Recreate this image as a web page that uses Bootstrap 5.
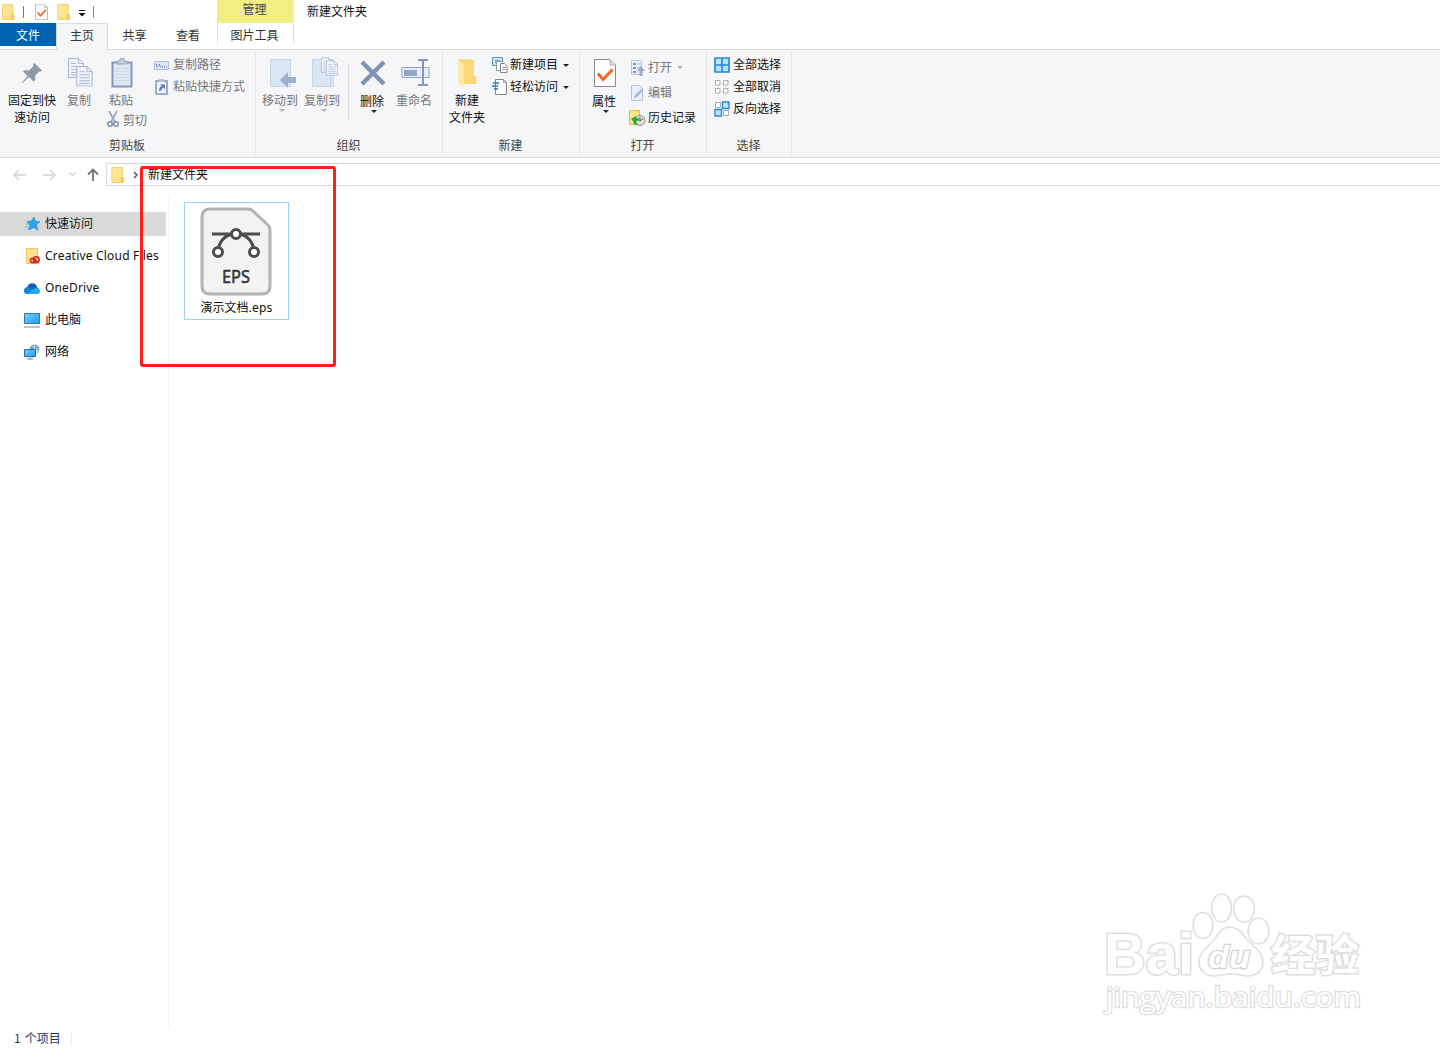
<!DOCTYPE html>
<html lang="zh-CN">
<head>
<meta charset="utf-8">
<meta name="viewport" content="width=device-width, initial-scale=1">
<title>新建文件夹</title>
<link href="https://cdn.jsdelivr.net/npm/bootstrap@5.3.0/dist/css/bootstrap.min.css" rel="stylesheet">
<style>
body{font-family:"Noto Sans","Noto Sans CJK SC",sans-serif;font-size:12px;line-height:17px;color:#111;background:#fff;height:1048px;overflow:hidden;white-space:nowrap}
.zh{font-family:"Noto Sans CJK SC",sans-serif}
svg{display:block;flex:none}
.titlebar{height:23px}
.manage{width:77px;margin-left:122px;background:#f1ee83;color:#444;text-align:center;height:23px;padding-right:2px}
.quick{width:95px;height:23px}
.tabs{height:27px;border-bottom:1px solid #dadbdc}
.tab-item{height:24px;line-height:24px;text-align:center;color:#333}
.tab-file{background:#0063b1;color:#fff;width:56px;height:23px;line-height:23px}
.tab-home{background:#f5f6f7;border:1px solid #dadbdc;border-bottom:0;width:52px;height:27px;line-height:22px}
.tab-pic{width:77px;border-left:1px solid #ddd;border-right:1px solid #ddd;height:21px;padding-right:2px}
.ribbon{height:108px;background:#f5f6f7;border-bottom:1px solid #dadbdc;padding-top:2px}
.rgroup{height:102px;border-right:1px solid #e2e3e4}
.rbody{height:84px}
.rlabel{text-align:center;color:#444;line-height:18px;margin-right:1px}
.big{text-align:center;flex:none}
.pic{height:39px;padding-top:2px;display:flex;align-items:center;justify-content:center}
.pic.low{height:40px}
.dim{color:#777}
.r22>div{height:22px}
.r22 span{padding-bottom:3px}
.r25>div{height:25px}
.r25 span{padding-bottom:2px}
.tri{width:0;height:0;border:3px solid transparent;border-top-color:#222;border-bottom:0}
.tri.soft{border-top-color:#b5b5b5}
.under{margin:1px auto 0 auto;position:relative;left:2px}
.vline{width:1px;height:56px;background:#dcdddf;margin-top:12px}
.addr{height:28px;padding-top:5px}
.addrbox{height:23px;border:1px solid #d9d9d9;border-right:0}
.addrbox span{padding-bottom:2px}
.side{width:169px;border-right:1px solid #f2f2f2;margin-top:10px;height:832px;padding-top:16px}
.side>div{height:24px;margin-bottom:8px;width:166px;padding-left:24px}
.side .on{background:#d9d9d9}
.side svg{margin-right:5px}
.side span{padding-bottom:3px}
.latin{font-family:"Noto Sans",sans-serif}
.side .latin{padding-bottom:2px}
.cc{letter-spacing:.2px}
.od{letter-spacing:.15px}
.tile{width:105px;height:118px;border:1px solid #99d1ff;margin:16px 0 0 15px;padding-top:4px}
.caption-line{line-height:18px;margin-top:1px}
.marker{position:absolute;left:140px;top:166px;width:196px;height:201px;border:3px solid #ff2015;border-radius:3px}
.wm{position:absolute;left:1095px;top:885px}
.status{height:20px;color:#1e395b;padding-left:14px}
.status span{padding-bottom:2px;word-spacing:1.5px}
</style>
<script src="https://cdn.jsdelivr.net/npm/bootstrap@5.3.0/dist/js/bootstrap.bundle.min.js"></script>
</head>
<body class="position-relative zh">
<svg width="0" height="0" class="position-absolute">
<defs>
<linearGradient id="gy" x2="1" y2="1"><stop stop-color="#ffeaa4"/><stop offset="1" stop-color="#ffdd79"/></linearGradient>
<linearGradient id="gb" x2="1" y2="1"><stop stop-color="#7cd0ff"/><stop offset="1" stop-color="#1b9df5"/></linearGradient>
<symbol id="fold" viewBox="0 0 14 17"><path d="M.5.5h11v10.500h1.500v5.500H.5z" fill="url(#gy)" stroke="#efcb5c"/><path d="M11 11v5" stroke="#e5b93c"/></symbol>
<symbol id="chk" viewBox="0 0 22 28"><path d="M.5.5h15.500l5.500 5.500v21.500H.5z" fill="#fff" stroke="#8b8b8b"/><path d="M16 .5V6h5.500" fill="#ddd" stroke="#aaa"/><path d="M4 14.500l5 6 9.500-10" fill="none" stroke="#f26522" stroke-width="3"/></symbol>
<symbol id="doc" viewBox="0 0 16 20"><path d="M.5.5h10l5 5v14H.5z" fill="#f2f6fc" stroke="#a3b5d3"/><path d="M10.500.5v5h5M3 5.500h5M3 8.500h10M3 11.500h10M3 14.500h10M3 17h10" fill="none" stroke="#a9bad6"/></symbol>
</defs>
</svg>

<header class="d-flex titlebar">
 <div class="quick d-flex align-items-center ps-1">
  <svg width="13" height="16" style="margin-left:-2px"><use href="#fold"/></svg>
  <svg width="1" height="12" class="ms-2"><path d="M.5 0v12" stroke="#777"/></svg>
  <svg width="13" height="16" style="margin-left:11px"><use href="#chk"/></svg>
  <svg width="14" height="16" style="margin-left:9px"><use href="#fold"/></svg>
  <svg width="8" height="7" style="margin:3px 0 0 7px"><path d="M1 .5h6" stroke="#111"/><path d="M.5 3h7L4 6.500z" fill="#111"/></svg>
  <svg width="1" height="12" style="margin-left:7px"><path d="M.5 0v12" stroke="#888"/></svg>
 </div>
 <div class="manage">管理</div>
 <div style="margin:2px 0 0 13px">新建文件夹</div>
</header>

<nav class="d-flex tabs">
 <div class="tab-item tab-file">文件</div>
 <div class="tab-item tab-home">主页</div>
 <div class="tab-item" style="width:53px">共享</div>
 <div class="tab-item" style="width:54px">查看</div>
 <div class="tab-item tab-pic" style="margin-left:2px">图片工具</div>
</nav>

<section class="ribbon d-flex">
 <div class="rgroup" style="width:256px">
  <div class="rbody d-flex">
   <div class="big" style="width:60px;margin-left:2px">
    <div class="pic"><svg width="22" height="22" viewBox="0 0 22 22"><path d="M13.500 1l7.500 7.500-2 1.500-1-.5-4 4.500.5 4-2 1.500-4.500-4.500L1.500 21 1 20.500 6.500 14 2 9.500 4 8l4 .5L12.500 4 12 2.500z" fill="#8f9ba3"/></svg></div>
    固定到快<br>速访问
   </div>
   <div class="big dim" style="width:34px"><div class="pic"><svg width="25" height="29" viewBox="0 0 25 29" style="margin-left:2px"><use href="#doc" width="16" height="20"/><use href="#doc" x="8" y="8" width="17" height="20.500"/></svg></div>复制</div>
   <div class="big dim" style="width:50px">
    <div class="pic"><svg width="22" height="30" viewBox="0 0 22 30" style="margin-left:2px"><path d="M1.500 4.500h19v24h-19z" fill="#dfe9f6" stroke="#8498bd" stroke-width="2"/><path d="M6 6V3h3V.5h4V3h3v3z" fill="#c3cddc" stroke="#98a5b9"/><path d="M4 10.500h14M4 13.500h14M4 16.500h14M4 19.500h14M4 22.500h14" stroke="#c9d9ee"/></svg></div>粘贴
    <div class="d-flex align-items-center" style="margin:3px 0 0 11px"><svg width="12" height="17" viewBox="0 0 12 17"><path d="M2 0l6 11M10 0L4 11" stroke="#99a9c6" stroke-width="1.800"/><circle cx="3" cy="13" r="2.300" fill="none" stroke="#7c8fb1" stroke-width="1.500"/><circle cx="9" cy="13" r="2.300" fill="none" stroke="#7c8fb1" stroke-width="1.500"/></svg><span class="ms-1">剪切</span></div>
   </div>
   <div class="r22 dim" style="margin:2px 0 0 8px">
    <div class="d-flex align-items-center"><svg width="15" height="9"><path d="M.5.5h14v8H.5z" fill="#dce8f7" stroke="#b0bfd8"/><path d="M2 3l1.500 3M5 3l1.500 3M8 6h1M10 6h1M12 6h1" stroke="#53709e"/></svg><span style="margin-left:4px">复制路径</span></div>
    <div class="d-flex align-items-center"><svg width="14" height="16" style="margin-left:1px"><path d="M1 2h11v13H1z" fill="#eef4fc" stroke="#8094b8" stroke-width="1.500"/><path d="M4 0h5v3H4z" fill="#b5c1d4"/><path d="M4 12q0-4 2.500-5L5 5.500h5v5L8.500 8.500Q6.500 9.500 6 12z" fill="#6681ac"/></svg><span style="margin-left:4px">粘贴快捷方式</span></div>
   </div>
  </div>
  <div class="rlabel">剪贴板</div>
 </div>

 <div class="rgroup" style="width:187px">
  <div class="rbody d-flex">
   <div class="big dim" style="width:42px;margin-left:3px"><div class="pic"><svg width="27" height="30" viewBox="0 0 27 30" style="margin-left:6px"><path d="M.5 1.500h20v27H.5z" fill="#dbe6f5" stroke="#c8d6ea"/><path d="M10 22l8-8v5h8v6h-8v5z" fill="#9eafcb"/></svg></div>移动到<div class="tri soft under"></div></div>
   <div class="big dim" style="width:42px"><div class="pic"><svg width="27" height="31" viewBox="0 0 27 31" style="margin-left:7px"><path d="M.5 2.500h21v27H.5z" fill="#dbe6f5" stroke="#c8d6ea"/><path d="M18.500 20v9" stroke="#bccde5"/><use href="#doc" x="9" y="0" width="12" height="16"/><use href="#doc" x="14" y="3" width="12" height="16"/></svg></div>复制到<div class="tri soft under"></div></div>
   <div class="vline" style="margin-left:5px"></div>
   <div class="big" style="width:38px;margin-left:4px"><div class="pic low"><svg width="26" height="26" viewBox="0 0 26 26" style="margin-left:2px"><path d="M2 2l22 22M24 2L2 24" stroke="#8093b5" stroke-width="4.500"/></svg></div>删除<div class="tri under"></div></div>
   <div class="big dim" style="width:46px"><div class="pic"><svg width="29" height="27" viewBox="0 0 29 27" style="margin-left:2px"><path d="M1 8.500h27v10H1z" fill="#e5effb" stroke="#91a4c5"/><path d="M3 11h13v6H3z" fill="#93a6c7"/><path d="M22 2v23M17 1h4l1 1 1-1h4M17 26h4l1-1 1 1h4" fill="none" stroke="#8597b7" stroke-width="2"/></svg></div>重命名</div>
  </div>
  <div class="rlabel">组织</div>
 </div>

 <div class="rgroup" style="width:137px">
  <div class="rbody d-flex">
   <div class="big" style="width:42px;margin-left:3px"><div class="pic"><svg width="19" height="28" viewBox="0 0 19 28"><path d="M2 1h14v16h2.500v8H2z" fill="#f9d877"/><path d="M0 1l6 4v23l-6-4z" fill="#ffeba8"/><path d="M0 1h14" stroke="#f0cf70"/></svg></div>新建<br>文件夹</div>
   <div class="r22" style="margin:2px 0 0 4px">
    <div class="d-flex align-items-center"><svg width="16" height="16"><path d="M.5.5h10v8H.5z" fill="#cfe7f5" stroke="#6692a8"/><path d="M3 3h5v3H3z" fill="#5baee0"/><path d="M4.500 4.500h6v9h-6z" fill="#fff" stroke="#999"/><path d="M8.500 6.500h4l2.500 2.500v6.500H8.500z" fill="#fff" stroke="#888"/><path d="M10 10.500h4M10 12.500h4" stroke="#aaa"/></svg><span style="margin:0 5px 0 2px">新建项目</span><div class="tri"></div></div>
    <div class="d-flex align-items-center"><svg width="16" height="16"><path d="M3.500.5h8l3 3v12h-11z" fill="#fff" stroke="#888"/><path d="M11.500.5v3h3" fill="none" stroke="#999"/><path d="M1 4h6M0 7h6M2 10h4" stroke="#2878b8" stroke-width="1.300"/></svg><span style="margin:0 5px 0 2px">轻松访问</span><div class="tri"></div></div>
   </div>
  </div>
  <div class="rlabel">新建</div>
 </div>

 <div class="rgroup" style="width:127px">
  <div class="rbody d-flex">
   <div class="big" style="width:42px;margin-left:3px"><div class="pic low"><svg width="22" height="28" style="margin-left:1px"><use href="#chk"/></svg></div>属性<div class="tri under"></div></div>
   <div class="r25" style="margin:3px 0 0 4px">
    <div class="d-flex align-items-center dim"><svg width="16" height="16" style="margin-left:1px"><path d="M1.500.5h10v14h-10z" fill="#e8f0fb" stroke="#b8c6de"/><path d="M3 3h3v2H3zM3 7h3v2H3zM3 11h3v2H3z" fill="#7d94ba"/><path d="M7 4h4M7 8h3" stroke="#a8b8d2"/><path d="M11 6l4 5h-2.500v5h-3v-5H7z" fill="#9aabc9"/></svg><span style="margin:0 5px 0 2px">打开</span><div class="tri soft"></div></div>
    <div class="d-flex align-items-center dim"><svg width="16" height="16" style="margin-left:1px"><path d="M1.500.5h8l3 3v12h-11z" fill="#e8f0fb" stroke="#b2c2dc"/><path d="M4 14l1-4 7-7 2 2-7 7z" fill="#adbdd6"/></svg><span style="margin-left:2px">编辑</span></div>
    <div class="d-flex align-items-center"><svg width="17" height="16"><path d="M.5.5h10v14H.5z" fill="#ffe58c" stroke="#e6bb3d"/><circle cx="11" cy="10.500" r="5" fill="#e3e3e3" stroke="#888"/><path d="M11 7v4l3-2" fill="none" stroke="#555"/><path d="M2 9l5-3v2q4 0 4 3-3-1-4 0l2 4q-5 0-5-4z" fill="#28a938"/></svg><span style="margin-left:2px">历史记录</span></div>
   </div>
  </div>
  <div class="rlabel">打开</div>
 </div>

 <div class="rgroup" style="width:85px">
  <div class="rbody r22" style="padding:2px 0 0 7px">
   <div class="d-flex align-items-center"><svg width="16" height="16"><path d="M1 1h14v14H1zM8 1v14M1 8h14" fill="#b9e2ff" stroke="#2989dc" stroke-width="1.700"/></svg><span style="margin-left:3px">全部选择</span></div>
   <div class="d-flex align-items-center"><svg width="16" height="16"><path d="M1.500 1.500h4.500v4.500h-4.500zM9.500 1.500h4.500v4.500h-4.500zM1.500 9.500h4.500v4.500h-4.500zM9.500 9.500h4.500v4.500h-4.500z" fill="#fff" stroke="#adadad"/></svg><span style="margin-left:3px">全部取消</span></div>
   <div class="d-flex align-items-center"><svg width="16" height="16"><path d="M1.500 1.500h5v5h-5zM9.500 9.500h5v5h-5z" fill="#fff" stroke="#adadad"/><path d="M8.500 1h6.500v6.500H8.500zM1 8.500h6.500V15H1z" fill="#b9e2ff" stroke="#2989dc" stroke-width="1.400"/></svg><span style="margin-left:3px">反向选择</span></div>
  </div>
  <div class="rlabel">选择</div>
 </div>
</section>

<div class="d-flex addr">
 <div class="d-flex align-items-center" style="width:106px;padding-left:13px">
  <svg width="13" height="12"><path d="M13 6H1M6 1L1 6l5 5" fill="none" stroke="#d4d4d4" stroke-width="1.500"/></svg>
  <svg width="13" height="12" style="margin-left:17px"><path d="M0 6h12M7 1l5 5-5 5" fill="none" stroke="#d4d4d4" stroke-width="1.500"/></svg>
  <svg width="7" height="5" style="margin-left:13px"><path d="M.5.5l3 3 3-3" fill="none" stroke="#ccc" stroke-width="1.200"/></svg>
  <svg width="12" height="13" style="margin-left:11px"><path d="M6 13V1M1 6.500L6 1.500l5 5" fill="none" stroke="#737373" stroke-width="1.800"/></svg>
 </div>
 <div class="addrbox flex-grow-1 d-flex align-items-center">
  <svg width="14" height="16" style="margin-left:4px"><use href="#fold"/></svg>
  <svg width="5" height="8" style="margin-left:8px"><path d="M1 1l3 3-3 3" fill="none" stroke="#555" stroke-width="1.500"/></svg>
  <span style="margin-left:10px">新建文件夹</span>
 </div>
</div>

<main class="d-flex" style="height:842px">
 <aside class="side">
  <div class="on d-flex align-items-center"><svg width="16" height="16"><path d="M10 1l1.500 4.500H16L12.500 9l1.500 5-4.500-2.500L5 14l1-5-3-3.500 4.500-.5z" fill="#2aa5ee" stroke="#1784c7" stroke-width=".6"/><path d="M2 8h4M1 11h4M3 13.500h2" stroke="#58b6ee"/></svg><span>快速访问</span></div>
  <div class="d-flex align-items-center"><svg width="16" height="16"><path d="M2.500.5h11v15h-11z" fill="#ffe391" stroke="#efc75a"/><g fill="none" stroke="#da1f26" stroke-width="1.500"><ellipse cx="9" cy="12.500" rx="2.600" ry="2.200"/><ellipse cx="12.300" cy="11.700" rx="2.900" ry="2.900"/><path d="M9 10.500l4 3"/></g></svg><span class="latin cc">Creative Cloud Files</span></div>
  <div class="d-flex align-items-center"><svg width="16" height="11" viewBox="0 0 16 11"><path d="M3 5Q4 0 8.500.3 12 .5 13 4l2 5H2z" fill="#0f5fb5"/><path d="M0 8q0-4 4-4 3 0 5 3l4 4H3Q0 11 0 8z" fill="#1282d6"/><path d="M4 11l5-5q6-4 7 2 0 3-3 3z" fill="#2aa8ec"/></svg><span class="latin od">OneDrive</span></div>
  <div class="d-flex align-items-center"><svg width="16" height="16"><path d="M.5 1.500h15v10H.5z" fill="url(#gb)" stroke="#34779f"/><path d="M0 15h16" stroke="#7590a3"/></svg><span>此电脑</span></div>
  <div class="d-flex align-items-center"><svg width="16" height="16"><circle cx="10.500" cy="5.500" r="5" fill="#7da7bf"/><path d="M9 1q3 1 2 4l4 1q-1 4-4 4z" fill="#c8dce6"/><path d="M.5 5.500h11v7H.5z" fill="url(#gb)" stroke="#276e9f"/><path d="M6 12v3M3 15h6" stroke="#6e8799"/></svg><span>网络</span></div>
 </aside>
 <section class="flex-grow-1">
  <div class="tile text-center">
   <svg width="74" height="90" viewBox="0 0 74 90" style="margin-left:14px"><path d="M11 2h38q3 0 5 2l15 14q2 2 2 5v56q0 8-8 8H11q-8 0-8-8V10q0-8 8-8z" fill="#f3f3f3" stroke="#b2b2b2" stroke-width="3"/><g fill="none" stroke="#4d4d4d" stroke-width="3"><path d="M13 27h48M19 42q4-15 18-15t18 15"/><g fill="#fff"><circle cx="37" cy="27" r="4.500"/><circle cx="19" cy="45" r="4.500"/><circle cx="55" cy="45" r="4.500"/></g></g><text x="23" y="75.500" font-family="Noto Sans" font-size="18" fill="#333" stroke="#333" stroke-width=".5" textLength="28" lengthAdjust="spacingAndGlyphs">EPS</text></svg>
   <div class="caption-line"><span>演示文档</span><span class="latin cc">.eps</span></div>
  </div>
 </section>
</main>

<footer class="status d-flex align-items-center"><span>1 个项目</span><svg width="1" height="12" style="margin-left:10px"><path d="M.5 0v12" stroke="#eee"/></svg></footer>

<svg class="wm" width="275" height="140" viewBox="0 0 275 140"><g fill="#fff" stroke="#dedede" stroke-width="1.500">
 <g stroke-width="3" font-weight="700">
  <text x="9" y="89" font-family="Liberation Sans" font-size="58" textLength="90" lengthAdjust="spacingAndGlyphs" paint-order="stroke">Bai</text>
  <text x="176" y="86" font-family="Noto Sans CJK SC" font-size="43" textLength="88" lengthAdjust="spacingAndGlyphs" paint-order="stroke">经验</text>
 </g>
 <ellipse cx="108" cy="40.500" rx="10" ry="13"/><ellipse cx="126.500" cy="23" rx="10" ry="14"/><ellipse cx="149" cy="24" rx="10.500" ry="13"/><ellipse cx="163.500" cy="46" rx="10.500" ry="13"/>
 <path d="M135 42c7 0 11 4 15 10 4 7 18 13 18 25 0 9-7 14-15 14-6 0-10-2-17-2s-11 2-17 2c-9 0-15-6-15-14 0-12 12-16 17-25 4-6 7-10 14-10z"/>
 <text x="113" y="83" font-family="Liberation Sans" font-weight="700" font-style="italic" font-size="32" textLength="42" lengthAdjust="spacingAndGlyphs" stroke="#d2d2d2" stroke-width="2.500" paint-order="stroke">du</text>
 <text x="11" y="122" font-family="Open Sans" font-size="27" font-weight="400" textLength="255" lengthAdjust="spacingAndGlyphs" stroke="#e0e0e0" stroke-width="2.500" paint-order="stroke">jingyan.baidu.com</text>
</g></svg>
<div class="marker"></div>
</body>
</html>
